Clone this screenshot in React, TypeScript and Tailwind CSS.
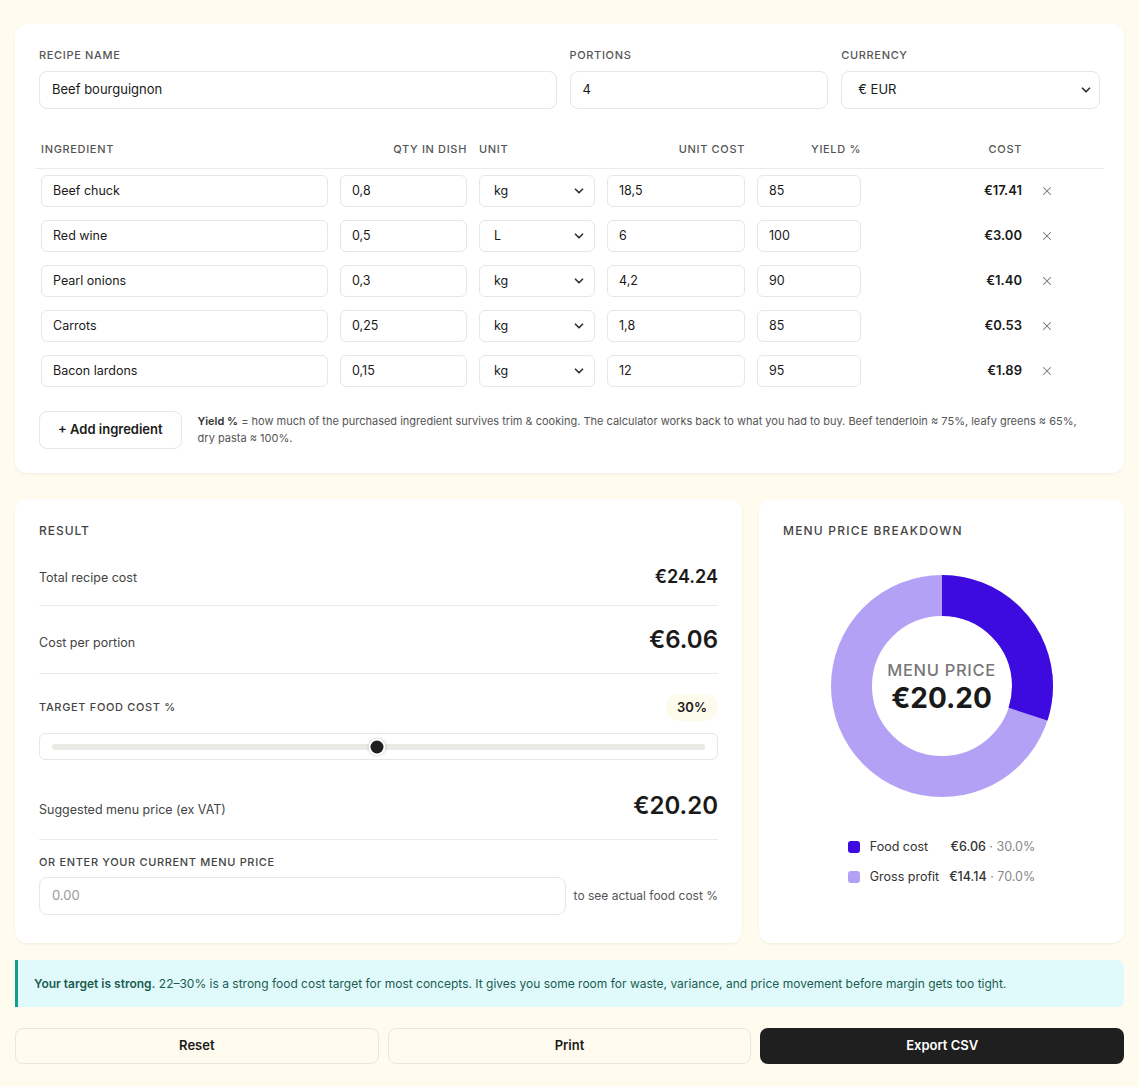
import { ChevronDown, X } from "lucide-react";

const ingredients = [
  { name: "Beef chuck", qty: "0,8", unit: "kg", cost: "18,5", yieldPct: "85", total: "€17.41" },
  { name: "Red wine", qty: "0,5", unit: "L", cost: "6", yieldPct: "100", total: "€3.00" },
  { name: "Pearl onions", qty: "0,3", unit: "kg", cost: "4,2", yieldPct: "90", total: "€1.40" },
  { name: "Carrots", qty: "0,25", unit: "kg", cost: "1,8", yieldPct: "85", total: "€0.53" },
  { name: "Bacon lardons", qty: "0,15", unit: "kg", cost: "12", yieldPct: "95", total: "€1.89" },
];

const cols = "grid grid-cols-[299px_139px_128px_150px_116px_161px_38px_1fr]";
const label = "text-[11px] font-medium uppercase tracking-[0.06em] text-[#555]";
const input =
  "w-full rounded-lg border border-[#e6e6e3] bg-white px-3 text-[13px] text-[#1a1a1a] outline-none";
const cell = "h-8 rounded-md border border-[#e6e6e3] bg-white px-[11px] text-[12.5px] text-[#1a1a1a] flex items-center";

const FakeSelect = ({ value, className }: { value: string; className: string }) => (
  <div className={`relative flex items-center justify-between ${className}`}>
    <span>{value}</span>
    <ChevronDown size={14} strokeWidth={3} className="text-[#333]" />
  </div>
);

const Donut = () => {
  const r = 90.5;
  const c = 2 * Math.PI * r;
  return (
    <div className="relative h-[222px] w-[222px]">
      <svg width="222" height="222" viewBox="0 0 222 222">
        <circle cx="111" cy="111" r={r} fill="none" stroke="#b3a1f6" strokeWidth="41" />
        <circle
          cx="111"
          cy="111"
          r={r}
          fill="none"
          stroke="#3d0ae0"
          strokeWidth="41"
          strokeDasharray={`${c * 0.3} ${c}`}
          transform="rotate(-90 111 111)"
        />
      </svg>
      <div className="absolute inset-0 flex flex-col items-center justify-center pt-1">
        <span className="text-[16.5px] font-medium leading-5 tracking-[0.04em] text-[#777]">MENU PRICE</span>
        <span className="text-[28px] font-bold leading-9 text-[#1a1a1a]">€20.20</span>
      </div>
    </div>
  );
};

export default function App() {
  return (
    <div className="min-h-[1087px] bg-[#fffcef] px-[15px] pt-6 pb-6 font-['Inter',sans-serif] text-[#1a1a1a]">
      {/* recipe card */}
      <section className="rounded-xl bg-white px-6 pt-[23px] pb-6 shadow-[0_1px_3px_rgba(0,0,0,0.06)]">
        <div className="grid grid-cols-[2fr_1fr_1fr] gap-[13px]">
          <div>
            <div className={`${label} mb-2 leading-4`}>Recipe name</div>
            <div className={`${input} flex h-[38px] items-center`}>Beef bourguignon</div>
          </div>
          <div>
            <div className={`${label} mb-2 leading-4`}>Portions</div>
            <div className={`${input} flex h-[38px] items-center`}>4</div>
          </div>
          <div>
            <div className={`${label} mb-2 leading-4`}>Currency</div>
            <FakeSelect value="€ EUR" className={`${input} h-[38px] pl-4 pr-1.5`} />
          </div>
        </div>

        <div className="-mx-1 mt-8">
          <div className={`${cols} border-b border-[#ecebe8] pb-[11px] text-[11px] font-medium uppercase tracking-[0.06em] leading-4 text-[#555]`}>
            <div className="px-1.5">Ingredient</div>
            <div className="px-1.5 text-right">Qty in dish</div>
            <div className="px-1.5">Unit</div>
            <div className="px-1.5 text-right">Unit cost</div>
            <div className="px-1.5 text-right">Yield %</div>
            <div className="px-1.5 text-right">Cost</div>
            <div />
            <div />
          </div>
          {ingredients.map((row) => (
            <div key={row.name} className={`${cols} items-center pt-1.5 pb-[7px]`}>
              <div className="px-1.5">
                <div className={cell}>{row.name}</div>
              </div>
              <div className="px-1.5">
                <div className={cell}>{row.qty}</div>
              </div>
              <div className="px-1.5">
                <FakeSelect value={row.unit} className={`${cell} pl-[14px] pr-2`} />
              </div>
              <div className="px-1.5">
                <div className={cell}>{row.cost}</div>
              </div>
              <div className="px-1.5">
                <div className={cell}>{row.yieldPct}</div>
              </div>
              <div className="px-1.5 text-right text-[13px] font-semibold">{row.total}</div>
              <div className="flex justify-center text-[#777]">
                <X size={14} strokeWidth={1.75} />
              </div>
              <div />
            </div>
          ))}
        </div>

        <div className="mt-[17px] flex items-center gap-4">
          <button className="h-[38px] shrink-0 rounded-lg border border-[#e6e6e3] bg-white px-[18px] text-[13px] font-semibold">
            + Add ingredient
          </button>
          <p className="text-[11px] leading-[17px] text-[#555]">
            <b className="font-semibold text-[#333]">Yield %</b> = how much of the purchased ingredient survives
            trim &amp; cooking. The calculator works back to what you had to buy. Beef tenderloin ≈ 75%, leafy
            greens ≈ 65%,
            <br />
            dry pasta ≈ 100%.
          </p>
        </div>
      </section>

      <div className="mt-[26px] grid grid-cols-[727px_1fr] gap-[17px]">
        {/* result card */}
        <section className="rounded-xl bg-white px-6 pt-6 pb-7 shadow-[0_1px_3px_rgba(0,0,0,0.06)]">
          <div className="text-[12px] font-medium uppercase leading-4 tracking-[0.08em] text-[#444]">Result</div>
          <div className="mt-2.5 flex items-center justify-between border-b border-[#ecebe8] py-3.5">
            <span className="pt-0.5 text-[12.5px] text-[#444]">Total recipe cost</span>
            <span className="text-[18px] font-semibold leading-7">€24.24</span>
          </div>
          <div className="flex items-center justify-between border-b border-[#ecebe8] pt-3.5 pb-[13px]">
            <span className="pt-1.5 text-[12.5px] text-[#444]">Cost per portion</span>
            <span className="text-[24px] font-semibold leading-10">€6.06</span>
          </div>

          <div className="mt-5 flex items-center justify-between">
            <span className="text-[11px] font-medium uppercase tracking-[0.06em] text-[#444]">Target food cost %</span>
            <span className="flex h-[27px] items-center rounded-full bg-[#fdfbec] px-[11px] text-[13px] font-semibold">
              30%
            </span>
          </div>
          <div className="mt-3 flex h-[27px] items-center rounded-md border border-[#e6e6e3] px-3">
            <div className="relative h-1.5 w-full rounded-full bg-[#ebe9e4]">
              <div className="absolute top-1/2 left-[49.8%] h-[17px] w-[17px] -translate-x-1/2 -translate-y-1/2 rounded-full border-2 border-white bg-[#1f1f1f] shadow-[0_0_3px_rgba(0,0,0,0.25)]" />
            </div>
          </div>

          <div className="mt-[30px] flex items-center justify-between border-b border-[#ecebe8] pb-[17px]">
            <span className="pt-2 text-[12.5px] text-[#444]">Suggested menu price (ex VAT)</span>
            <span className="text-[24px] font-semibold leading-8">€20.20</span>
          </div>

          <div className="mt-[14px] text-[11px] font-medium uppercase leading-4 tracking-[0.06em] text-[#444]">
            Or enter your current menu price
          </div>
          <div className="mt-[7px] flex items-center gap-2">
            <div className={`${input} flex h-[38px] flex-1 items-center text-[#999]`}>0.00</div>
            <span className="text-[12px] text-[#555]">to see actual food cost %</span>
          </div>
        </section>

        {/* breakdown card */}
        <section className="rounded-xl bg-white px-6 pt-6 pb-6 shadow-[0_1px_3px_rgba(0,0,0,0.06)]">
          <div className="text-[12px] font-medium uppercase leading-4 tracking-[0.1em] text-[#444]">
            Menu price breakdown
          </div>
          <div className="mt-9 flex justify-center">
            <Donut />
          </div>
          <div className="mt-[41px] flex justify-center">
            <div className="grid grid-cols-[12px_auto_auto] items-center gap-x-2.5 gap-y-[11px] text-[12.5px]">
              <span className="h-3 w-3 rounded-[3px] bg-[#3d0ae0]" />
              <span className="text-[#333]">Food cost</span>
              <span className="text-right">
                <b className="font-medium text-[#333]">€6.06</b> <span className="text-[#888]">· 30.0%</span>
              </span>
              <span className="h-3 w-3 rounded-[3px] bg-[#b3a1f6]" />
              <span className="text-[#333]">Gross profit</span>
              <span className="text-right">
                <b className="font-medium text-[#333]">€14.14</b> <span className="text-[#888]">· 70.0%</span>
              </span>
            </div>
          </div>
        </section>
      </div>

      <div className="mt-[17px] flex h-[47px] items-center rounded-r-md border-l-[3px] border-[#13a08b] bg-[#e0fafb] pl-4 text-[12px] text-[#1b5c50]">
        <p>
          <b className="font-semibold">Your target is strong.</b> 22–30% is a strong food cost target for most
          concepts. It gives you some room for waste, variance, and price movement before margin gets too tight.
        </p>
      </div>

      <div className="mt-[21px] grid grid-cols-3 gap-[9px]">
        <button className="h-9 rounded-lg border border-[#e9e7df] bg-[#fffcef] text-[13px] font-semibold">Reset</button>
        <button className="h-9 rounded-lg border border-[#e9e7df] bg-[#fffcef] text-[13px] font-semibold">Print</button>
        <button className="h-9 rounded-lg bg-[#1f1f1f] text-[13px] font-semibold text-white">Export CSV</button>
      </div>
    </div>
  );
}
